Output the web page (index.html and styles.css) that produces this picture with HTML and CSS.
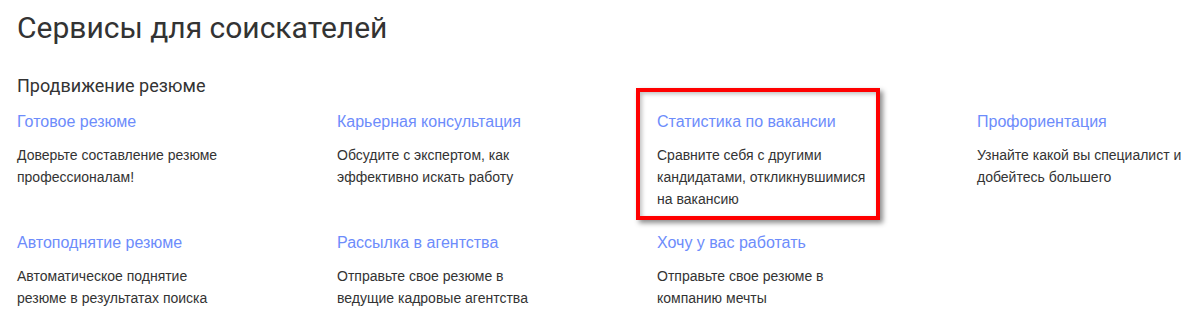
FILE: index.html
```html
<!DOCTYPE html>
<html>
  <head>
    <meta charset="utf-8">
    <title>Сервисы для соискателей</title>
    <link rel="stylesheet" href="styles.css">
  </head>
  <body>
    <div id="principal">
      <h1 class="titulo">Сервисы для соискателей</h1>
      <h2 class="subtitulo">Продвижение резюме</h2>

      <div class="servicos">
        <div class="servico">
          <a class="servico-link">Готовое резюме</a>
          <p class="servico-texto">Доверьте составление резюме<br>профессионалам!</p>
        </div>
        <div class="servico">
          <a class="servico-link">Карьерная консультация</a>
          <p class="servico-texto">Обсудите с экспертом, как<br>эффективно искать работу</p>
        </div>
        <div class="servico destaque">
          <a class="servico-link">Статистика по вакансии</a>
          <p class="servico-texto">Сравните себя с другими<br>кандидатами, откликнувшимися<br>на вакансию</p>
          <span class="moldura"></span>
        </div>
        <div class="servico">
          <a class="servico-link">Профориентация</a>
          <p class="servico-texto">Узнайте какой вы специалист и<br>добейтесь большего</p>
        </div>

        <div class="servico">
          <a class="servico-link">Автоподнятие резюме</a>
          <p class="servico-texto">Автоматическое поднятие<br>резюме в результатах поиска</p>
        </div>
        <div class="servico">
          <a class="servico-link">Рассылка в агентства</a>
          <p class="servico-texto">Отправьте свое резюме в<br>ведущие кадровые агентства</p>
        </div>
        <div class="servico">
          <a class="servico-link">Хочу у вас работать</a>
          <p class="servico-texto">Отправьте свое резюме в<br>компанию мечты</p>
        </div>
      </div>
    </div>
  </body>
</html>
```

FILE: styles.css
```css
*{
  box-sizing: border-box;
}

body{
  margin: 0;
  background: #fff;
  font-family: "Liberation Sans", Arial, sans-serif;
  color: #333;
  overflow: hidden;
}

#principal{
  padding: 10px 0 0 17px;
}

.titulo{
  margin: 0;
  font-family: Roboto, "Liberation Sans", sans-serif;
  font-weight: 400;
  font-size: 30px;
  line-height: 36px;
  color: #333;
}

.subtitulo{
  margin: 28px 0 0 0;
  font-family: Roboto, "Liberation Sans", sans-serif;
  font-weight: 400;
  font-size: 18px;
  line-height: 24px;
  color: #333;
}

.servicos{
  display: grid;
  grid-template-columns: 320px 320px 320px 1fr;
  row-gap: 18px;
  margin-top: 9px;
}

.servico{
  position: relative;
  padding-top: 5px;
}

.servico-link{
  display: block;
  font-size: 16px;
  line-height: 20px;
  color: #6d8cfb;
  cursor: pointer;
}

.servico-texto{
  margin: 12px 0 0 0;
  font-size: 14px;
  line-height: 22px;
  color: #333;
}

.moldura{
  position: absolute;
  left: -21px;
  top: -19px;
  width: 244px;
  height: 132px;
  border: 4px solid #f00;
  box-shadow: 3px 3px 5px rgba(0, 0, 0, .45), inset 2px 2px 4px rgba(0, 0, 0, .25);
}
```
